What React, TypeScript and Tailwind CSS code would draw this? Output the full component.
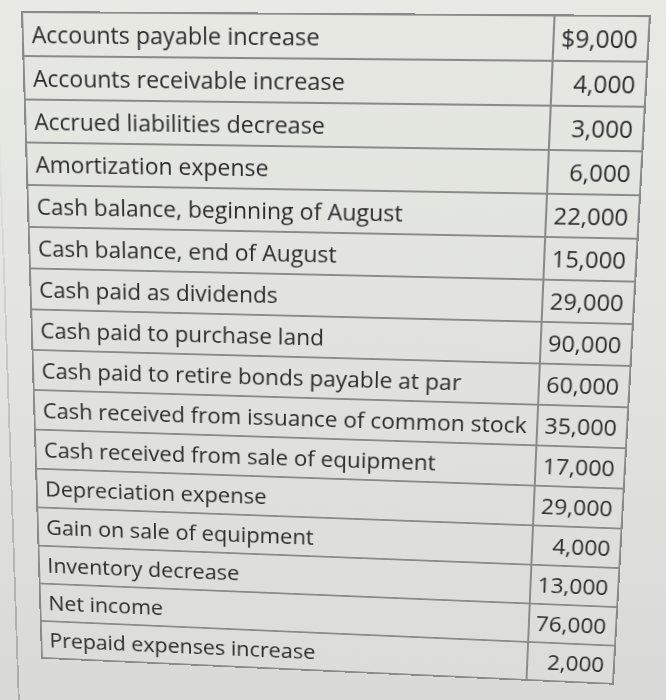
import React from 'react';

const rows: [string, string][] = [
    ['Accounts payable increase', '$9,000'],
    ['Accounts receivable increase', '4,000'],
    ['Accrued liabilities decrease', '3,000'],
    ['Amortization expense', '6,000'],
    ['Cash balance, beginning of August', '22,000'],
    ['Cash balance, end of August', '15,000'],
    ['Cash paid as dividends', '29,000'],
    ['Cash paid to purchase land', '90,000'],
    ['Cash paid to retire bonds payable at par', '60,000'],
    ['Cash received from issuance of common stock', '35,000'],
    ['Cash received from sale of equipment', '17,000'],
    ['Depreciation expense', '29,000'],
    ['Gain on sale of equipment', '4,000'],
    ['Inventory decrease', '13,000'],
    ['Net income', '76,000'],
    ['Prepaid expenses increase', '2,000'],
];

const App = () => {
    return (
        <div className="w-[666px] h-[700px] overflow-hidden bg-linear-to-b from-[#e8eae3] via-[#e3e4e0] to-[#d9d9d7]">
            {/* table is photographed at an angle, so the flat grid is projected */}
            <div className="relative w-[607px] origin-top-left [transform:matrix3d(0.998516,0.005682,0,-0.000060484,0.034064,1.008237,0,0.000137935,0,0,1,0,21,11,0,1)] border-t-2 border-l-2 border-[#8a8a88] bg-linear-to-b from-[#e6e8e1] to-[#dcdcda] font-['Open_Sans',sans-serif] text-[23px] text-[#2c2c2c]">
                {/* edge of the panel behind the table */}
                <div className="absolute left-[-29px] top-[120px] h-[680px] w-[2px] bg-linear-to-b from-transparent via-[#bdbdbb] to-[#a8a8a6]" />
                {rows.map(([label, value]) => (
                    <div key={label} className="flex h-[44px]">
                        <div className="w-[516px] flex items-center pl-[8px] whitespace-nowrap border-r-2 border-b-2 border-[#8a8a88]">
                            {label}
                        </div>
                        <div className="flex-1 flex items-center justify-end pr-[9px] border-r-2 border-b-2 border-[#8a8a88]">
                            {value}
                        </div>
                    </div>
                ))}
            </div>
        </div>
    );
};

export default App;
